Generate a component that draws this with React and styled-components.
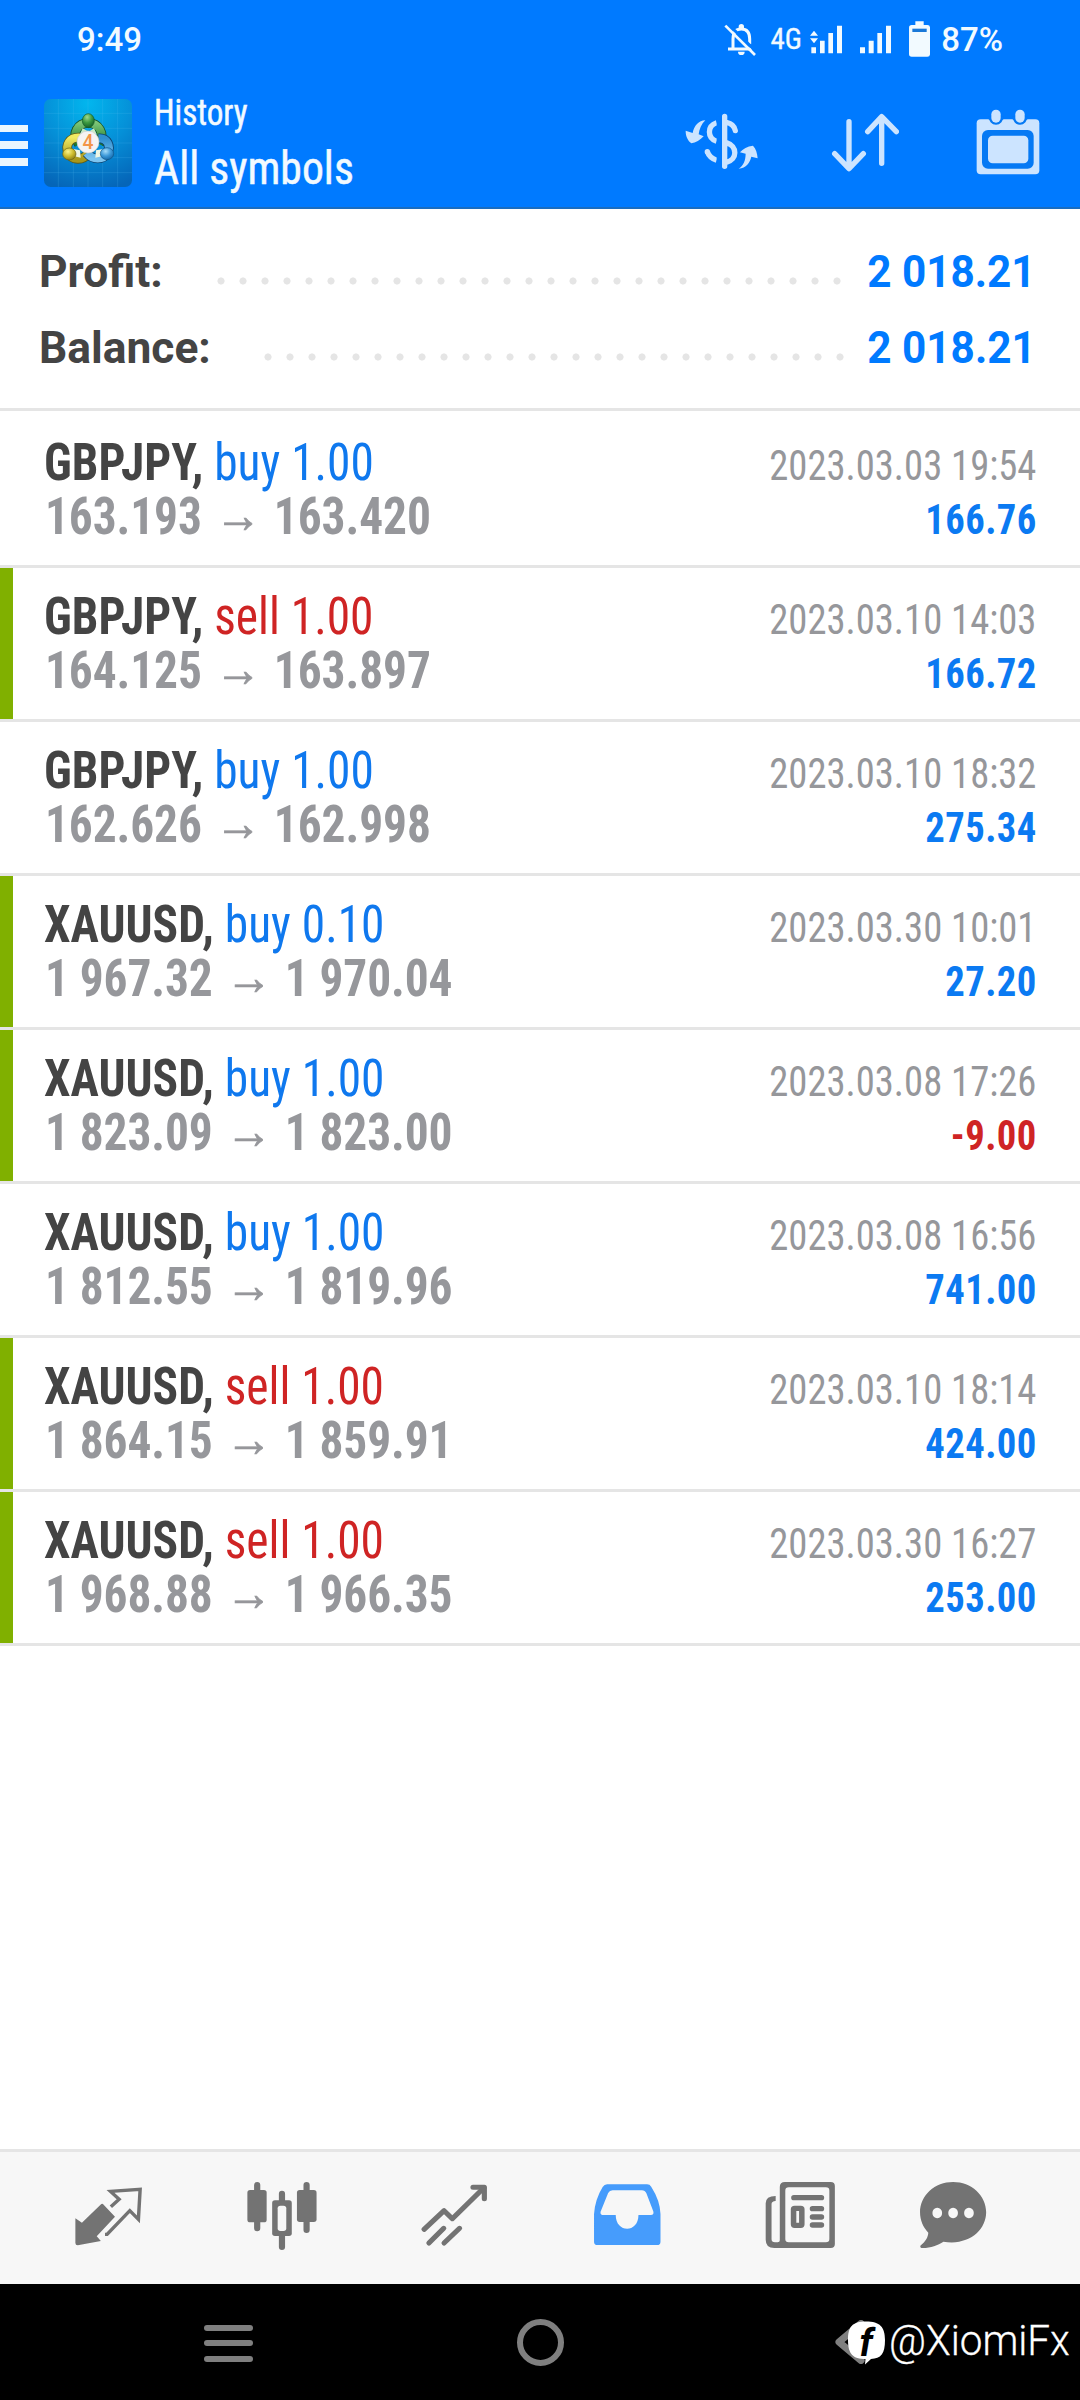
import React from "react";
import styled, { createGlobalStyle } from "styled-components";

const blue = "#007aff";
const ink = "#444444";
const muted = "#96979b";
const line = "#e5e5e5";
const iconGray = "#737373";
const iconPale = "#cce4ff";

const Global = createGlobalStyle`
  body { margin: 0; background: #fff; }
  * { box-sizing: border-box; }
`;

const Screen = styled.div`
  width: 1080px;
  height: 2400px;
  display: flex;
  flex-direction: column;
  background: #fff;
  font-family: Roboto, sans-serif;
  overflow: hidden;
`;

/* ---------- header ---------- */

const Header = styled.header`
  height: 209px;
  background: ${blue};
  border-bottom: 2px solid #1a6dc0;
  color: #fff;
  flex: none;
`;

const StatusBar = styled.div`
  height: 79px;
  display: flex;
  justify-content: space-between;
  padding: 0 77px 0 77px;
  font-size: 33px;
  font-weight: 500;
  line-height: 79px;
  color: #f2faff;
`;

const StatusIcons = styled.div`
  display: flex;
  align-items: center;
`;

const Network = styled.span`
  width: 30px;
  margin: 0 9px 0 14px;
  font-size: 29px;
  font-family: "Roboto Condensed", Roboto, sans-serif;
  font-weight: 400;
  -webkit-text-stroke: 0.3px currentColor;
`;

const Percent = styled.span`
  margin-left: 11px;
`;

const AppBar = styled.div`
  display: flex;
  height: 128px;
  padding-right: 40px;
`;

const MenuButton = styled.button`
  width: 28px;
  height: 41px;
  margin: 45.5px 16px 0 0;
  padding: 0;
  border: 0;
  background: none;
  display: flex;
  flex-direction: column;
  justify-content: space-between;
`;

const MenuBar = styled.span`
  height: 7.5px;
  background: #eaf6ff;
`;

const LogoSlot = styled.div`
  margin: 20px 22px 0 0;
  height: 88px;
`;

const Titles = styled.div`
  flex: 1;
  font-family: "Roboto Condensed", Roboto, sans-serif;
  color: #f2faff;
  white-space: nowrap;
  -webkit-text-stroke: 0.5px currentColor;
`;

const Subtitle = styled.div`
  margin-top: 12px;
  font-size: 36px;
  line-height: 44px;
  transform: scaleX(0.92);
  transform-origin: left;
`;

const Title = styled.div`
  margin-top: 3px;
  font-size: 47px;
  line-height: 60px;
  transform: scaleX(0.93);
  transform-origin: left;
`;

const Actions = styled.div`
  display: flex;
  align-items: flex-start;
  padding-top: 30px;
`;

const ActionButton = styled.button`
  padding: 0;
  border: 0;
  background: none;
  display: flex;
  margin-left: ${(p) => p.$gap}px;
`;

/* ---------- summary ---------- */

const Summary = styled.section`
  height: 202px;
  flex: none;
  padding: 25px 44px 0 39px;
  border-bottom: 3px solid ${line};
`;

const SummaryRow = styled.div`
  display: flex;
  align-items: flex-start;
  height: 76px;
  line-height: 76px;
  font-size: 45px;
  font-weight: 700;
`;

const SummaryLabel = styled.span`
  flex: none;
  width: ${(p) => p.$width}px;
  color: ${ink};
  white-space: nowrap;
  transform: scaleX(0.985);
  transform-origin: left;
`;

const Leader = styled.span`
  flex: none;
  width: ${(p) => p.$count * 22}px;
  height: 22px;
  margin-top: 36px;
  background: radial-gradient(circle at 11px 11px, ${line} 3.2px, transparent 3.9px) 0 0 / 22px 22px;
`;

const SummaryValue = styled.span`
  flex: 1;
  text-align: right;
  color: ${blue};
  white-space: nowrap;
  transform: scaleX(0.94);
  transform-origin: right;
`;

/* ---------- deals ---------- */

const Deals = styled.main`
  flex: 1;
  padding-top: 3px;
  font-family: "Roboto Condensed", Roboto, sans-serif;
`;

const Deal = styled.article`
  display: flex;
  justify-content: space-between;
  height: 154px;
  padding: 22px 44px 0 44px;
  border-bottom: 3px solid ${line};
  box-shadow: ${(p) => (p.$marked ? "inset 13px 0 0 #80b000" : "none")};
  line-height: 54px;
  white-space: nowrap;
`;

const DealMain = styled.div`
  transform: scaleX(0.93);
  transform-origin: left;
  font-size: 51px;
  font-weight: 700;
`;

const Symbol = styled.div`
  color: ${ink};
`;

const Operation = styled.span`
  font-weight: 400;
  color: ${(p) => (p.$side === "sell" ? "#cf2424" : "#0f78ee")};
`;

const Prices = styled.div`
  color: ${muted};
  padding-left: 1px;
  letter-spacing: -0.1px;
`;

const Arrow = styled.span`
  font-family: Roboto, sans-serif;
  font-weight: 700;
  font-size: 50px;
  line-height: 40px;
  vertical-align: 2px;
  margin: 0 13.5px 0 14px;
  -webkit-text-stroke: 0.8px currentColor;
`;

const DealMeta = styled.div`
  padding-top: 3px;
  text-align: right;
  font-size: 42px;
  transform: scaleX(0.92);
  transform-origin: right;
`;

const DealTime = styled.div`
  color: ${muted};
`;

const DealProfit = styled.div`
  font-weight: 700;
  color: ${(p) => (p.$negative ? "#cf2424" : "#0b7af2")};
  letter-spacing: 0.5px;
  margin-right: -0.5px;
`;

/* ---------- bottom bars ---------- */

const Tabs = styled.nav`
  height: 135px;
  flex: none;
  display: flex;
  align-items: center;
  padding: 0 0 4px 22px;
  border-top: 3px solid ${line};
  background: #f7f7f7;
`;

const Tab = styled.button`
  width: ${(p) => (p.$narrow ? 132 : 173)}px;
  padding: 0;
  border: 0;
  background: none;
  display: flex;
  justify-content: center;
`;

const SystemNav = styled.footer`
  position: relative;
  height: 116px;
  flex: none;
  display: flex;
  align-items: center;
  background: #000;
`;

const NavMenu = styled.div`
  width: 48.5px;
  height: 37px;
  margin: 2px 264.5px 0 204px;
  display: flex;
  flex-direction: column;
  justify-content: space-between;
`;

const NavBar = styled.span`
  height: 6px;
  border-radius: 3px;
  background: #7f7f7f;
`;

const NavHome = styled.div`
  width: 47px;
  height: 47px;
  margin-top: 1px;
  border: 6px solid #7f7f7f;
  border-radius: 50%;
`;

const NavBack = styled.div`
  margin-left: 271px;
  display: flex;
`;

const Watermark = styled.div`
  position: absolute;
  left: 847.5px;
  top: 34px;
  display: flex;
  align-items: center;
  height: 50px;
  font-size: 43px;
  line-height: 50px;
  color: #fff;
  white-space: nowrap;
`;

const WatermarkText = styled.span`
  font-weight: 300;
  margin: -7px 0 0 4px;
  transform: scaleX(0.94);
  transform-origin: left;
  -webkit-text-stroke: 0.3px currentColor;
`;

const BrandSvg = styled.svg`
  overflow: visible;
`;

/* ---------- drawings ---------- */

const Svg = ({ box, w, h, children }) => (
  <svg viewBox={box} width={w} height={h} preserveAspectRatio="none" fill="none">
    {children}
  </svg>
);

const BellOff = () => (
  <Svg box="195 64 98 102" w={32.7} h={34}>
    <path d="M207 142H278" stroke="#f2faff" strokeWidth="9" />
    <path d="M222 142V112C222 92 232 82 247 82C262 82 272 92 272 112V128" stroke="#f2faff" strokeWidth="9" />
    <path d="M239 80V75a8 8 0 0 1 16 0V80Z M237 150h20a10 10 0 0 1-20 0Z" fill="#f2faff" />
    <path d="M206 66L294 152" stroke={blue} strokeWidth="9" />
    <path d="M199 72L288 160" stroke="#f2faff" strokeWidth="8" />
  </Svg>
);

const Signals = () => (
  <Svg box="450 60 362 110" w={120.7} h={36.7}>
    <g fill="#f2faff">
      <path d="M462 89L474 104H450ZM462 127L474 112H450ZM454 139h14v18h-14ZM480 119h14v38h-14ZM505 96h14v61h-14ZM531 74h15v83h-15Z" />
      <path d="M600 139h15v18h-15ZM626 119h15v38h-15ZM652 96h14v61h-14ZM678 74h15v83h-15Z" />
      <path d="M766 61H791V72H802Q810 72 810 80V159Q810 167 802 167H755Q747 167 747 159V80Q747 72 755 72H766Z" />
    </g>
    <path d="M757 83H800V93H757Z" fill="#1a78d8" />
  </Svg>
);

const Logo = () => (
  <Svg box="0 0 264 264" w={88} h={88}>
    <defs>
      <radialGradient id="bg" cx="0.5" cy="0.05" r="1">
        <stop offset="0" stopColor="#02b6ee" />
        <stop offset="0.5" stopColor="#0590d8" />
        <stop offset="1" stopColor="#0565b8" />
      </radialGradient>
      <linearGradient id="gr" x1="0" y1="0" x2="0" y2="1">
        <stop offset="0" stopColor="#7cc576" />
        <stop offset="1" stopColor="#1d7a2e" />
      </linearGradient>
      <linearGradient id="ye" x1="0" y1="0" x2="0" y2="1">
        <stop offset="0" stopColor="#f0ea62" />
        <stop offset="1" stopColor="#a8971b" />
      </linearGradient>
      <linearGradient id="bl" x1="0" y1="0" x2="0" y2="1">
        <stop offset="0" stopColor="#2f8fd0" />
        <stop offset="1" stopColor="#7cc4f0" />
      </linearGradient>
      <radialGradient id="gb" cx="0.4" cy="0.25" r="0.8">
        <stop offset="0" stopColor="#9fd98c" />
        <stop offset="0.5" stopColor="#3c9a40" />
        <stop offset="1" stopColor="#0f5a25" />
      </radialGradient>
      <radialGradient id="yb" cx="0.4" cy="0.3" r="0.8">
        <stop offset="0" stopColor="#fbf48a" />
        <stop offset="0.5" stopColor="#cdbb2c" />
        <stop offset="1" stopColor="#7d7010" />
      </radialGradient>
      <radialGradient id="bb" cx="0.4" cy="0.3" r="0.8">
        <stop offset="0" stopColor="#a5dcfa" />
        <stop offset="0.5" stopColor="#3b98d8" />
        <stop offset="1" stopColor="#0f5f9f" />
      </radialGradient>
    </defs>
    <rect width="264" height="264" rx="20" fill="url(#bg)" />
    <path d="M43 0V264M88 0V264M132 0V264M176 0V264M221 0V264M0 43H264M0 88H264M0 132H264M0 176H264M0 221H264" stroke="#5cc4f5" strokeOpacity="0.22" strokeWidth="2.5" />
    <path d="M104 134C80 104 102 72 133 72C164 72 184 104 166 134" stroke="#174f22" strokeWidth="29" />
    <path d="M104 134C80 104 102 72 133 72C164 72 184 104 166 134" stroke="url(#gr)" strokeWidth="24" />
    <path d="M110 116C76 112 62 140 74 162C84 184 116 186 132 164" stroke="#5e5a16" strokeWidth="29" />
    <path d="M110 116C76 112 62 140 74 162C84 184 116 186 132 164" stroke="url(#ye)" strokeWidth="24" />
    <path d="M164 118C190 116 202 142 190 162C178 184 146 184 128 162" stroke="#0c426f" strokeWidth="29" />
    <path d="M164 118C190 116 202 142 190 162C178 184 146 184 128 162" stroke="url(#bl)" strokeWidth="24" />
    <path d="M116 88L134 98L150 88L158 106H108Z" fill="#c9ecc4" />
    <path d="M88 150L108 154L110 176L92 172Z M178 150L156 154L154 176L174 172Z" fill="#eef6e4" />
    <ellipse cx="133" cy="65" rx="18" ry="21" fill="url(#gb)" stroke="#145c27" strokeWidth="2" />
    <ellipse cx="76" cy="165" rx="20" ry="18" fill="url(#yb)" stroke="#6b6212" strokeWidth="2" />
    <ellipse cx="189" cy="164" rx="20" ry="18" fill="url(#bb)" stroke="#0f5488" strokeWidth="2" />
    <circle cx="132" cy="129" r="33" fill="#f6f3f2" stroke="#c9cdd0" strokeWidth="2" />
    <text x="132" y="150" textAnchor="middle" fontFamily="Roboto, sans-serif" fontWeight="500" fontSize="58" fill="#f39548">4</text>
  </Svg>
);

const CurrencyIcon = () => (
  <Svg box="76 327 220 198" w={73.3} h={66}>
    <g stroke={iconPale} strokeWidth="16" strokeLinecap="round">
      <path d="M195 349V499M200 367C215 370 225 378 227 392M200 428C234 438 234 479 200 487" />
      <path d="M171 368C142 378 142 413 171 424" strokeLinecap="butt" />
      <path d="M143 455C147 467 157 476 171 481" strokeLinecap="butt" />
    </g>
    <circle cx="143" cy="455" r="8" fill={iconPale} />
    <path d="M171 350h16v160h-16Z" fill={blue} />
    <path d="M137 361C117 361 103 378 99 399L78 392C78 410 85 422 95 430C108 428 122 420 132 409L117 403C119 388 125 372 137 361Z" fill={iconPale} />
    <path d="M237 506C252 496 258 480 258 461L241 457C250 446 263 439 280 437C289 446 293 460 294 475L275 470C271 488 260 504 237 506Z" fill={iconPale} />
  </Svg>
);

const SortIcon = () => (
  <Svg box="512 327 206 198" w={68.7} h={66}>
    <g stroke={iconPale} strokeWidth="16" strokeLinecap="round" strokeLinejoin="round">
      <path d="M566 365V505M523 461L566 506L609 461" />
      <path d="M664 490V352M622 395L664 350L708 395" />
    </g>
  </Svg>
);

const CalendarIcon = () => (
  <Svg box="948 327 192 198" w={64} h={66}>
    <rect x="950" y="358" width="188" height="165" rx="12" fill={iconPale} />
    <rect x="966" y="390" width="155" height="116" rx="18" fill="#0579f4" />
    <rect x="984" y="407" width="121" height="83" rx="14" fill={iconPale} />
    <path d="M985 348a23 26 0 0 0 46 0ZM1057 348a23 26 0 0 0 46 0Z" fill="#0579f4" />
    <path d="M985 350h46v8h-46ZM1057 350h46v8h-46Z" fill={blue} />
    <rect x="994" y="329" width="28" height="39" rx="14" fill={iconPale} />
    <rect x="1066" y="329" width="28" height="39" rx="14" fill={iconPale} />
  </Svg>
);

const QuotesIcon = () => (
  <Svg box="215 114 200 228" w={68.9} h={76}>
    <path d="M299 192L334 230L281 289L293 303L226 316Q219 316 219 309V235L238 248L292 194Q296 190 299 192Z" fill={iconGray} />
    <path d="M322 200L346 178L321 154L407 148L402 238L377 212L311 283H305" stroke={iconGray} strokeWidth="10" />
  </Svg>
);

const ChartIcon = () => (
  <Svg box="712 114 208 228" w={71.6} h={76}>
    <g stroke={iconGray} strokeWidth="18" strokeLinecap="round">
      <path d="M744.5 135V265M888 135V270M816.5 161V185M816.5 285V321" />
    </g>
    <rect x="716" y="150" width="56" height="97" rx="8" fill={iconGray} />
    <rect x="860" y="150" width="57" height="96" rx="8" fill={iconGray} />
    <rect x="788" y="181" width="57" height="107" rx="8" fill={iconGray} />
    <rect x="804" y="197" width="25" height="76" rx="8" fill="#f7f7f7" />
  </Svg>
);

const TradeIcon = () => (
  <Svg box="1222 114 194 228" w={66.8} h={76}>
    <g stroke={iconGray} strokeWidth="15" strokeLinecap="round" strokeLinejoin="round">
      <path d="M1231 268L1289 212L1313 236L1404 144" />
      <path d="M1373 142H1406V176" />
      <path d="M1245 309L1288 265M1289 309L1334 265" />
    </g>
  </Svg>
);

const HistoryIcon = () => (
  <Svg box="155 114 198 228" w={68.2} h={76}>
    <path fillRule="evenodd" d="M196 133H312Q320 133 324 140Q350 182 351 222V305Q351 315 341 315H168Q158 315 158 305V222Q161 178 183 141Q188 133 196 133ZM212 151Q203 151 199 159L177 215Q175 225 186 225H221C221 280 287 280 287 225H323Q333 225 330 214L310 160Q306 151 297 151Z" fill="#469cfc" />
  </Svg>
);

const NewsIcon = () => (
  <Svg box="655 114 206 228" w={70.9} h={76}>
    <path fillRule="evenodd" d="M713 126H846Q858 126 858 138V312Q858 324 846 324H682Q657 324 657 299V190Q657 168 686 168V183Q674 184 674 192V297Q674 307 684 307H692Q698 307 698 301V141Q698 126 713 126ZM724 142Q714 142 714 152V297Q714 307 724 307H832Q842 307 842 297V152Q842 142 832 142Z" fill={iconGray} />
    <path d="M739 173H819M793 206H819M793 231H819M793 255H819" stroke={iconGray} strokeWidth="16" strokeLinecap="round" />
    <rect x="738" y="205" width="24" height="51" rx="3" stroke={iconGray} strokeWidth="16" />
  </Svg>
);

const ChatIcon = () => (
  <Svg box="1100 114 198 228" w={68.2} h={76}>
    <path fillRule="evenodd" d="M1199 126C1252 126 1295 166 1295 217C1295 270 1245 318 1171 305C1155 316 1134 324 1111 324Q1102 324 1104 317C1120 303 1126 292 1127 278C1112 262 1103 241 1103 217C1103 166 1146 126 1199 126ZM1153 203a14 16 0 1 0 .1 0ZM1199 203a14 16 0 1 0 .1 0ZM1245 203a14 16 0 1 0 .1 0Z" fill={iconGray} />
  </Svg>
);

const BackIcon = () => (
  <svg width="30" height="44" viewBox="0 0 30 44" fill="none">
    <path d="M26 3.5L4 22L26 40.5" stroke="#7f7f7f" strokeWidth="7" strokeLinecap="round" strokeLinejoin="round" />
  </svg>
);

const BrandMark = () => (
  <BrandSvg width="37" height="44" viewBox="0 0 37 44">
    <path d="M18 0.5C32 0.5 37 6 37 19C37 33 33 37.5 23 38L17 43.5L17.5 38C5 38 0 33 0 19C0 6 4 0.5 18 0.5Z" fill="#fff" />
    <text x="18" y="35" textAnchor="middle" fontFamily="Roboto, sans-serif" fontStyle="italic" fontWeight="700" fontSize="38" fill="#000">f</text>
  </BrandSvg>
);

/* ---------- data ---------- */

const totals = [
  { label: "Profit:", value: "2 018.21", width: 171.4, dots: 29 },
  { label: "Balance:", value: "2 018.21", width: 218.3, dots: 27 },
];

const deals = [
  { symbol: "GBPJPY", side: "buy", lots: "1.00", open: "163.193", close: "163.420", time: "2023.03.03 19:54", profit: "166.76" },
  { symbol: "GBPJPY", side: "sell", lots: "1.00", open: "164.125", close: "163.897", time: "2023.03.10 14:03", profit: "166.72", marked: true },
  { symbol: "GBPJPY", side: "buy", lots: "1.00", open: "162.626", close: "162.998", time: "2023.03.10 18:32", profit: "275.34" },
  { symbol: "XAUUSD", side: "buy", lots: "0.10", open: "1 967.32", close: "1 970.04", time: "2023.03.30 10:01", profit: "27.20", marked: true },
  { symbol: "XAUUSD", side: "buy", lots: "1.00", open: "1 823.09", close: "1 823.00", time: "2023.03.08 17:26", profit: "-9.00", marked: true },
  { symbol: "XAUUSD", side: "buy", lots: "1.00", open: "1 812.55", close: "1 819.96", time: "2023.03.08 16:56", profit: "741.00" },
  { symbol: "XAUUSD", side: "sell", lots: "1.00", open: "1 864.15", close: "1 859.91", time: "2023.03.10 18:14", profit: "424.00", marked: true },
  { symbol: "XAUUSD", side: "sell", lots: "1.00", open: "1 968.88", close: "1 966.35", time: "2023.03.30 16:27", profit: "253.00", marked: true },
];

const tabs = [QuotesIcon, ChartIcon, TradeIcon, HistoryIcon, NewsIcon, ChatIcon];

export default function App() {
  return (
    <Screen>
      <Global />
      <Header>
        <StatusBar>
          <span>9:49</span>
          <StatusIcons>
            <BellOff />
            <Network>4G</Network>
            <Signals />
            <Percent>87%</Percent>
          </StatusIcons>
        </StatusBar>
        <AppBar>
          <MenuButton>
            <MenuBar />
            <MenuBar />
            <MenuBar />
          </MenuButton>
          <LogoSlot>
            <Logo />
          </LogoSlot>
          <Titles>
            <Subtitle>History</Subtitle>
            <Title>All symbols</Title>
          </Titles>
          <Actions>
            <ActionButton $gap={0}><CurrencyIcon /></ActionButton>
            <ActionButton $gap={72}><SortIcon /></ActionButton>
            <ActionButton $gap={76.7}><CalendarIcon /></ActionButton>
          </Actions>
        </AppBar>
      </Header>

      <Summary>
        {totals.map((t) => (
          <SummaryRow key={t.label}>
            <SummaryLabel $width={t.width}>{t.label}</SummaryLabel>
            <Leader $count={t.dots} />
            <SummaryValue>{t.value}</SummaryValue>
          </SummaryRow>
        ))}
      </Summary>

      <Deals>
        {deals.map((d) => (
          <Deal key={d.symbol + d.time} $marked={d.marked}>
            <DealMain>
              <Symbol>
                {d.symbol}, <Operation $side={d.side}>{d.side} {d.lots}</Operation>
              </Symbol>
              <Prices>
                {d.open}
                <Arrow>→</Arrow>
                {d.close}
              </Prices>
            </DealMain>
            <DealMeta>
              <DealTime>{d.time}</DealTime>
              <DealProfit $negative={d.profit.startsWith("-")}>{d.profit}</DealProfit>
            </DealMeta>
          </Deal>
        ))}
      </Deals>

      <Tabs>
        {tabs.map((Icon, i) => (
          <Tab key={i} $narrow={i === tabs.length - 1}>
            <Icon />
          </Tab>
        ))}
      </Tabs>

      <SystemNav>
        <NavMenu>
          <NavBar />
          <NavBar />
          <NavBar />
        </NavMenu>
        <NavHome />
        <NavBack>
          <BackIcon />
        </NavBack>
        <Watermark>
          <BrandMark />
          <WatermarkText>@XiomiFx</WatermarkText>
        </Watermark>
      </SystemNav>
    </Screen>
  );
}
